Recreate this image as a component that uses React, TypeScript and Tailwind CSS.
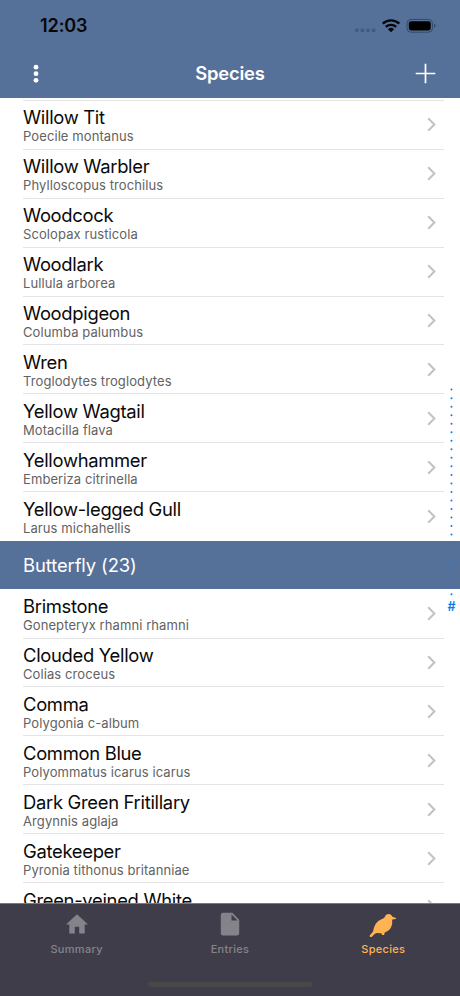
import React from "react";

type Species = { name: string; latin: string };

const birds: Species[] = [
  { name: "Willow Tit", latin: "Poecile montanus" },
  { name: "Willow Warbler", latin: "Phylloscopus trochilus" },
  { name: "Woodcock", latin: "Scolopax rusticola" },
  { name: "Woodlark", latin: "Lullula arborea" },
  { name: "Woodpigeon", latin: "Columba palumbus" },
  { name: "Wren", latin: "Troglodytes troglodytes" },
  { name: "Yellow Wagtail", latin: "Motacilla flava" },
  { name: "Yellowhammer", latin: "Emberiza citrinella" },
  { name: "Yellow-legged Gull", latin: "Larus michahellis" },
];

const butterflies: Species[] = [
  { name: "Brimstone", latin: "Gonepteryx rhamni rhamni" },
  { name: "Clouded Yellow", latin: "Colias croceus" },
  { name: "Comma", latin: "Polygonia c-album" },
  { name: "Common Blue", latin: "Polyommatus icarus icarus" },
  { name: "Dark Green Fritillary", latin: "Argynnis aglaja" },
  { name: "Gatekeeper", latin: "Pyronia tithonus britanniae" },
  { name: "Green-veined White", latin: "Pieris napi" },
];

function Row({ name, latin, last }: Species & { last?: boolean }) {
  return (
    <li className="flex h-[48.9px] shrink-0 pl-[23px]">
      <div
        className={`flex w-[421px] items-center justify-between border-b pr-[8px] ${
          last ? "border-transparent" : "border-[#e4e4e6]"
        }`}
      >
        <div className="whitespace-nowrap pt-[1.1px]">
          <div className="text-[18.4px] leading-[22px] tracking-[-0.3px] text-[#0a0a0a]">{name}</div>
          <div className="text-[13px] leading-[16px] tracking-[0.09px] text-[#626262]">{latin}</div>
        </div>
        <svg width="9" height="15" viewBox="0 0 9 15" fill="none" stroke="#c2c2c5" strokeWidth="2">
          <path d="M1.2 1.3 7.4 7.5 1.2 13.7" />
        </svg>
      </div>
    </li>
  );
}

function StatusBar() {
  return (
    <div className="flex h-[51px] items-center justify-between pl-[40px] pr-[24px]">
      <span className="text-[18px] font-semibold leading-none tracking-[-0.1px] text-[#05070a]">12:03</span>
      <svg width="82" height="16" viewBox="0 0 82 16">
        <g fill="#3f5a83">
          <rect x="1" y="10.5" width="3.6" height="3.6" rx="1" />
          <rect x="6.6" y="10.5" width="3.6" height="3.6" rx="1" />
          <rect x="12.2" y="10.5" width="3.6" height="3.6" rx="1" />
          <rect x="17.8" y="10.5" width="3.6" height="3.6" rx="1" />
        </g>
        <g fill="none" stroke="#05070a" strokeWidth="2.4">
          <path d="M28.7 5.6a12.2 12.2 0 0 1 16.6 0" />
          <path d="M31.8 8.9a7.6 7.6 0 0 1 10.4 0" />
        </g>
        <path d="M33.9 11.2a4.5 4.5 0 0 1 6.2 0L37 14.3z" fill="#05070a" />
        <rect x="53" y="1.4" width="25.5" height="12.8" rx="4" fill="none" stroke="#344967" />
        <rect x="54.8" y="3.2" width="22" height="9.2" rx="2.4" fill="#000" />
        <path d="M80 5.8v4q1.6-.5 1.6-2t-1.6-2z" fill="#344967" />
      </svg>
    </div>
  );
}

export default function App() {
  return (
    <div className="flex h-[996px] w-[460px] flex-col overflow-hidden bg-white font-['Inter','Liberation_Sans',sans-serif]">
      <header className="h-[98px] shrink-0 bg-[#567199] text-white">
        <StatusBar />
        <div className="grid h-[45px] grid-cols-[1fr_auto_1fr] items-center pl-[33px] pr-[24px]">
          <svg width="6" height="20" viewBox="0 0 6 20" fill="#fff">
            <circle cx="3" cy="3.2" r="2.4" />
            <circle cx="3" cy="9.7" r="2.4" />
            <circle cx="3" cy="16.3" r="2.4" />
          </svg>
          <h1 className="-ml-[9px] text-[18.4px] font-semibold leading-none tracking-[-0.2px]">Species</h1>
          <svg className="justify-self-end" width="21" height="21" viewBox="0 0 21 21" stroke="#fff" strokeWidth="1.7">
            <path d="M.7 10.5h19.6M10.5.7v19.6" />
          </svg>
        </div>
      </header>

      <main className="relative h-[805px] shrink-0 overflow-hidden">
        <div className="ml-[23px] mt-[2px] h-px w-[421px] bg-[#e4e4e6]" />
        <ul className="flex flex-col">
          {birds.map((s, i) => (
            <Row key={s.name} {...s} last={i === birds.length - 1} />
          ))}
        </ul>
        <h2 className="flex h-[48.4px] items-center bg-[#567199] pl-[23px] pt-[1.5px] text-[18.4px] tracking-[-0.1px] text-white">
          Butterfly (23)
        </h2>
        <ul className="flex flex-col pt-[0.3px]">
          {butterflies.map((s) => (
            <Row key={s.name} {...s} />
          ))}
        </ul>

        {/* Section index floating over the list's right edge */}
        <svg className="absolute right-[4px] top-[287px]" width="9" height="230" viewBox="0 0 9 230" fill="#087cf0">
          {Array.from({ length: 25 }, (_, i) => (
            <circle key={i} cx="4.5" cy={4.6 + i * 8.53} r="1" opacity={i >= 18 && i <= 23 ? 0.85 : 1} />
          ))}
        </svg>
        <span className="absolute right-[4px] top-[502px] w-[9px] text-center text-[12.5px] font-semibold leading-[14px] text-[#087cf0]">
          #
        </span>
      </main>

      <nav className="flex h-[93px] shrink-0 flex-col border-t border-[#7a7880] bg-[#403d4b] text-[11px] font-medium tracking-[0.3px] text-[#85838a]">
        <div className="grid h-[60px] grid-cols-3">
          <div className="flex flex-col items-center pt-[7px]">
            <svg width="26" height="26" viewBox="0 0 26 26" fill="currentColor">
              <path d="M13 3.2 2 13.6h3.3v8.9h5.5v-6.8h4.4v6.8h5.5v-8.9H24l-2.4-2.3z" />
            </svg>
            <span className="mt-[5px] leading-[14px]">Summary</span>
          </div>
          <div className="flex flex-col items-center pt-[7px]">
            <svg width="26" height="26" viewBox="0 0 26 26" fill="currentColor">
              <path fillRule="evenodd" d="M5.8 1.8h9.6l6.8 6.9v13.6q0 2.2-2.2 2.2H6q-2.2 0-2.2-2.2V4q0-2.2 2-2.2zm8.7 1.8v6h6z" />
            </svg>
            <span className="mt-[5px] leading-[14px]">Entries</span>
          </div>
          <div className="flex flex-col items-center pt-[7px] text-[#ffb352]">
            <svg width="28" height="26" viewBox="0 0 28 26" fill="currentColor">
              <path d="M15.8 6C16.3 4 17.9 3 19.6 3c1.8 0 3.2 1.1 3.8 2.8l3.5 1.3v.8l-3.6.5c-.4 1.2.1 2.7-.2 4.5-.5 3.2-2.3 6-5.3 7.7l-2.1 1-.6 2.4-2 .1-.7-1.9-4.7-.2c-2 .4-3.2 2.1-4.7 3.7-.9.8-2.6.2-2.3-1.1l3.4-4.2c.7-4.1 1.9-7.6 5.2-10.4 2.1-1.7 5.5-2 6.5-4z" />
            </svg>
            <span className="mt-[5px] leading-[14px]">Species</span>
          </div>
        </div>
        <div className="mx-auto mt-[18px] h-[5px] w-[164px] rounded-full bg-[#484849]" />
      </nav>
    </div>
  );
}
